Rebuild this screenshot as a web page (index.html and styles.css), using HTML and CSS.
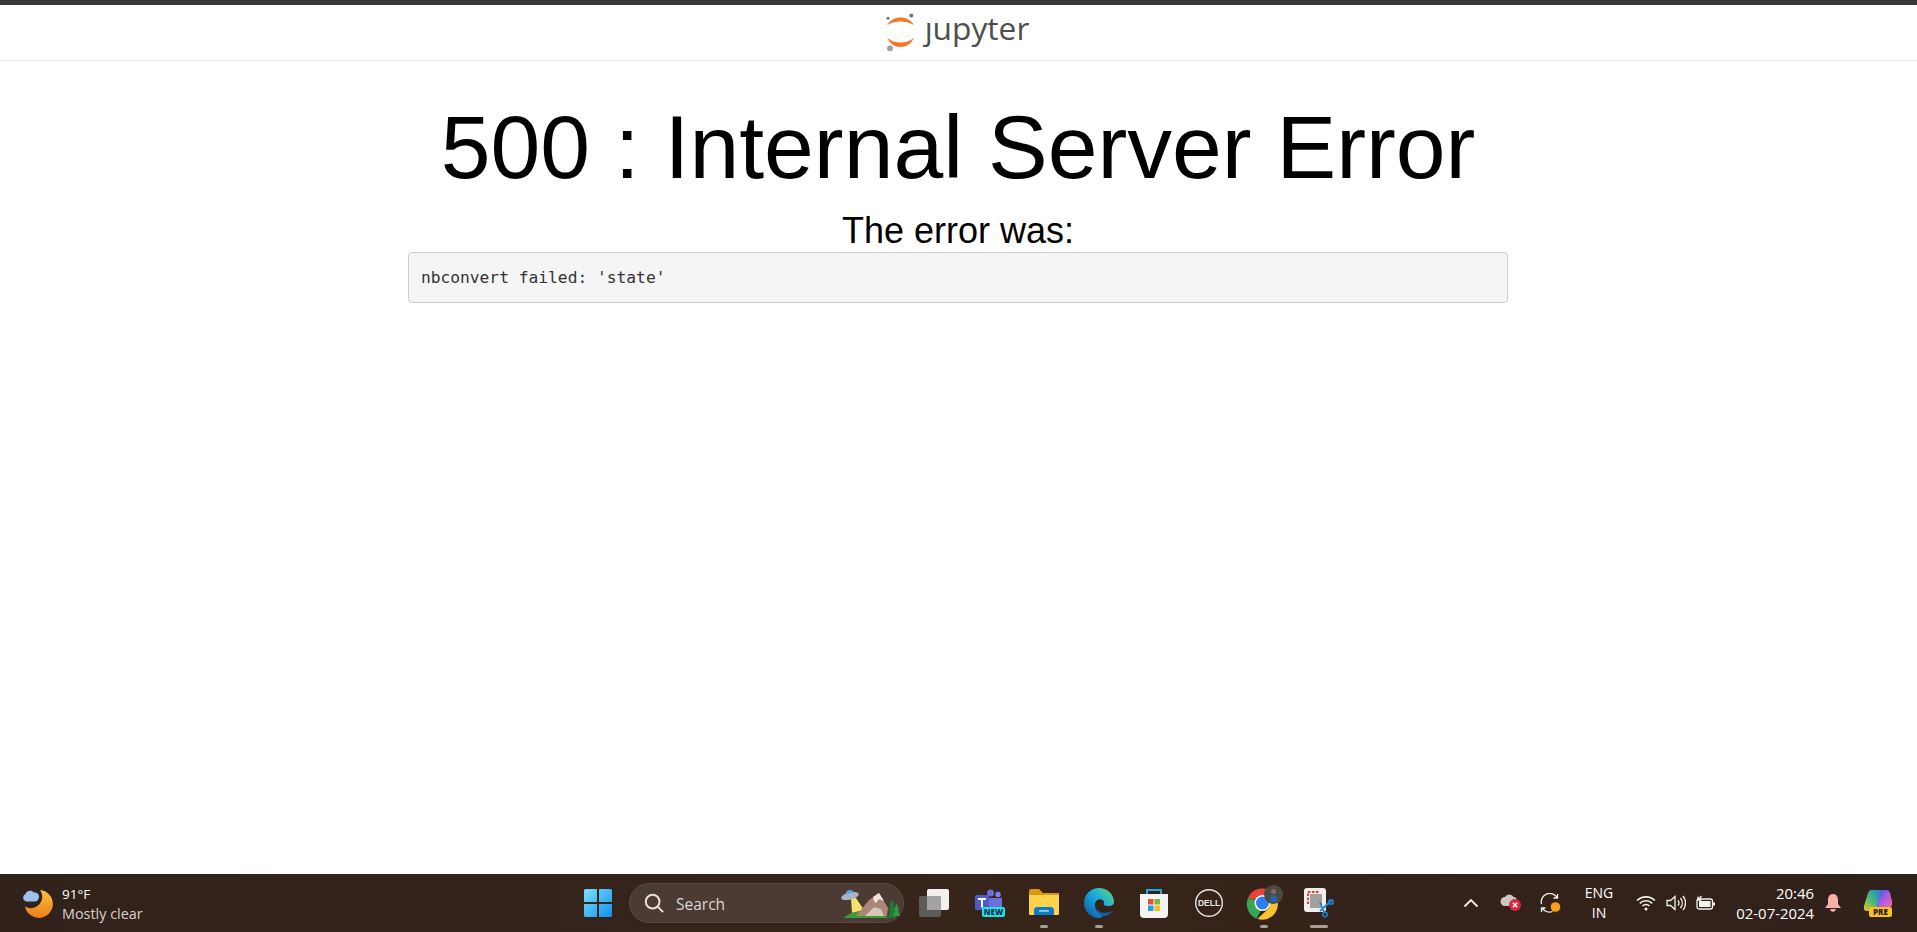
FILE: index.html
```html
<!DOCTYPE html>
<html lang="en">
<head>
  <meta charset="utf-8" />
  <title>500 : Internal Server Error</title>
  <link rel="stylesheet" href="styles.css">
</head>
<body>
  <div class="browser-page">
    <header class="navbar">
      <a class="brand" href="#" aria-label="jupyter">
        <svg class="brand-mark" width="32" height="40" viewBox="0 0 32 40">
          <path fill="#f37726" d="M2.3 12C5 7 10 4.5 15.5 4.5S26 7 29 12C25 9.5 20 8.5 15.5 8.5S6 9.5 2.3 12Z"/>
          <path fill="#f37726" d="M2.3 25C6 28 11 29.5 15.5 29.5S25 28 29 25C26 31 21 34 15.5 34S5 31 2.3 25Z"/>
          <circle cx="26.3" cy="2.6" r="2" fill="#767677"/>
          <circle cx="3" cy="5.3" r="1.4" fill="#616262"/>
          <circle cx="5" cy="35.3" r="2.9" fill="#9e9e9e"/>
        </svg>
        <span class="brand-name">ȷupyter</span>
      </a>
    </header>

    <main class="error">
      <h1>500 : Internal Server Error</h1>
      <h2>The error was:</h2>
      <pre>nbconvert failed: 'state'</pre>
    </main>
  </div>

  <footer class="taskbar">
    <div class="weather">
      <svg width="32" height="32" viewBox="0 0 32 32">
        <defs>
          <linearGradient id="moonFill" x1="0" y1="0" x2="0" y2="1">
            <stop offset="0" stop-color="#fcc23a"/>
            <stop offset="1" stop-color="#ee7d1b"/>
          </linearGradient>
        </defs>
        <path fill="url(#moonFill)" d="M19 3A14 14 0 1 1 4 19C12 26 27 15 19 3Z"/>
        <path fill="#9cc3ee" d="M5 14.500A4 4 0 0 1 4.500 7C5.500 3.500 10.500 2.500 13 5.500C16 5 18 7 18 9.500C18 12.500 16 14.500 13.500 14.500Z"/>
      </svg>
      <div class="weather-text">
        <div class="temp">91°F</div>
        <div class="cond">Mostly clear</div>
      </div>
    </div>

    <div class="task-icons">
      <div class="task-btn start">
        <svg width="30" height="30" viewBox="0 0 30 30">
          <defs>
            <linearGradient id="winFill" x1="0" y1="0" x2="1" y2="1">
              <stop offset="0" stop-color="#7ce0fb"/>
              <stop offset="1" stop-color="#0f8fee"/>
            </linearGradient>
          </defs>
          <path fill="url(#winFill)" d="M1 2.500Q1 1 2.500 1H14V14H1ZM16 1H27.500Q29 1 29 2.500V14H16ZM1 16H14V29H2.500Q1 29 1 27.500ZM16 16H29V27.500Q29 29 27.500 29H16Z"/>
        </svg>
      </div>

      <div class="search-pill">
        <svg width="20" height="20" viewBox="0 0 22 22" fill="none" stroke="#e6e1dd" stroke-width="2.200">
          <circle cx="9.500" cy="9.500" r="7.500"/>
          <path d="M15 15L21 21"/>
        </svg>
        <span class="search-label">Search</span>
        <svg class="search-art" width="59" height="31" viewBox="0 0 59 31">
          <path fill="#f2e46c" d="M10 10H15L23 22L11 25Z"/>
          <path fill="#3f9a3d" d="M3 30C8 25 18 22 25 24C33 24 42 26 48 30Z"/>
          <path fill="#a98676" d="M15 28L28 12L38 5L47 20L46 28Z"/>
          <path fill="#efe4de" d="M32 9L38 5L43 13L38 11L35 15L33 13Z"/>
          <path fill="#d9c6bb" d="M24 28L33 19L40 21L43 28Z"/>
          <path fill="#1f7a3a" d="M47 30L49 23H47L50 17H48.500L51 11L53.500 17H52L55 23H53L55 30Z"/>
          <path fill="#2d9a3f" d="M52 28L54 22H53L55.500 15L58 22H57L59 28Z"/>
          <ellipse cx="9" cy="8" rx="9" ry="3.600" fill="#a9b4c4" transform="rotate(-14 9 8)"/>
          <path fill="#5da7e0" d="M4.500 6.500A4.500 4.500 0 0 1 13 4.500Z"/>
        </svg>
      </div>

      <div class="task-btn">
        <svg width="32" height="32" viewBox="0 0 32 32">
          <rect x="1" y="9" width="22" height="21" rx="2" fill="#5d5b5a"/>
          <rect x="9" y="2" width="22" height="21" rx="2" fill="#f1f0ef"/>
          <rect x="9" y="9" width="14" height="14" fill="#a5a3a2"/>
        </svg>
      </div>

      <div class="task-btn">
        <svg width="32" height="32" viewBox="0 0 32 32">
          <circle cx="17.500" cy="6" r="3.500" fill="#6d6fd6"/>
          <circle cx="25" cy="7.500" r="2.700" fill="#7b83eb"/>
          <path fill="#6a6fdb" d="M15 11H29V23H15Z"/>
          <rect x="2" y="8" width="14" height="15" rx="1.500" fill="#5059c9"/>
          <path fill="#fff" d="M5 11H13V13H10V20.500H8V13H5Z"/>
          <rect x="9" y="20" width="23" height="10" rx="2" fill="#1ee4ea"/>
          <text class="badge-new" x="20.500" y="28">NEW</text>
        </svg>
      </div>

      <div class="task-btn running">
        <svg width="32" height="32" viewBox="0 0 32 32">
          <path fill="#d79a12" d="M1 4Q1 2 3 2H11L15 6H31V28H1Z"/>
          <path fill="#fcd34d" d="M1 8H31V26Q31 28 29 28H3Q1 28 1 26Z"/>
          <path fill="#0f7cc6" d="M6 24Q6 20 9 20H23Q26 20 26 24V28H6Z"/>
          <rect x="11" y="23" width="10" height="1.800" rx="0.900" fill="#8fd2f7"/>
        </svg>
      </div>

      <div class="task-btn running">
        <svg width="32" height="32" viewBox="0 0 32 32">
          <defs>
            <linearGradient id="edgeFill" x1="0" y1="1" x2="1" y2="0">
              <stop offset="0" stop-color="#0b4f9e"/>
              <stop offset="0.550" stop-color="#1ba9dd"/>
              <stop offset="1" stop-color="#5fdc74"/>
            </linearGradient>
          </defs>
          <path fill="url(#edgeFill)" d="M16 1C24 1 31 7 31 15C31 16 30.800 17 30.500 17.500C28 20 24 19.500 21.500 18.500C20 17.800 20.500 16 21 15C19 11 13 12 12 17C11 22 15 27 20 29C18.500 30.500 17 31 16 31C7.500 31 1 24 1 16C1 8 7.500 1 16 1Z"/>
          <path fill="#33221a" d="M31 17C28 20 24 19.500 21.500 18.500C20 17.800 20.500 16 21 15C19 11 13 12 12 17C12 21 15 24.500 19 25.500C24 26.500 28 25 30 23C30.700 21 31 19 31 17Z"/>
          <path fill="#0f5ea8" d="M12 17C11 22 15 27 20 29C24 29.500 28 27 30 23C28 25 24 26.500 19 25.500C15 24.500 12 21 12 17Z"/>
        </svg>
      </div>

      <div class="task-btn">
        <svg width="32" height="32" viewBox="0 0 32 32">
          <path fill="none" stroke="#27a5e3" stroke-width="2" d="M9 8V3H23V8"/>
          <path fill="#f5f4f3" d="M2 7H30V27Q30 31 26 31H6Q2 31 2 27Z"/>
          <rect x="10" y="12" width="5.500" height="5.500" fill="#e8512d"/>
          <rect x="16.500" y="12" width="5.500" height="5.500" fill="#7cb82f"/>
          <rect x="10" y="18.500" width="5.500" height="5.500" fill="#1fa2e8"/>
          <rect x="16.500" y="18.500" width="5.500" height="5.500" fill="#fbbb1c"/>
        </svg>
      </div>

      <div class="task-btn">
        <svg width="30" height="30" viewBox="0 0 30 30">
          <circle cx="15" cy="15" r="13.300" fill="none" stroke="#e9e6e3" stroke-width="1.400"/>
          <text class="dell-text" x="15" y="18">DELL</text>
        </svg>
      </div>

      <div class="task-btn running">
        <svg class="chrome-icon" width="38" height="36" viewBox="0 0 38 36">
          <path fill="#e8443a" d="M3 13A15.500 15.500 0 0 1 30 10L17.500 10A8 8 0 0 0 10.500 14.500Z"/>
          <path fill="#36a853" d="M3 13L10.500 15A8 8 0 0 0 16 25.500L11.500 33.500A15.500 15.500 0 0 1 3 13Z"/>
          <path fill="#f8c32c" d="M30 10A15.500 15.500 0 0 1 12.500 33.800L22 25A8 8 0 0 0 24 14Z"/>
          <circle cx="17.500" cy="18" r="8" fill="#fff"/>
          <circle cx="17.500" cy="18" r="6.500" fill="#2f7cf0"/>
          <circle cx="28.500" cy="9.500" r="9.500" fill="#4a4a42"/>
          <circle cx="28.500" cy="6.500" r="2.500" fill="#8a6a55"/>
          <path fill="#2b5f9f" d="M25 17V11Q28.500 8.500 32 11V17Z"/>
        </svg>
      </div>

      <div class="task-btn running wide">
        <svg width="32" height="32" viewBox="0 0 32 32">
          <rect x="1" y="1" width="22" height="24" rx="3" fill="#f0efee"/>
          <path fill="none" stroke="#d9432e" stroke-width="2" stroke-dasharray="2.500 1.500" d="M5 17V5H17"/>
          <path fill="#a3a1a0" d="M7 7H19V21H7Z"/>
          <path fill="none" stroke="#1a86d8" stroke-width="1.800" d="M17 24L29 13M17 15L21 25"/>
          <circle cx="28" cy="15" r="2.200" fill="none" stroke="#1a86d8" stroke-width="1.600"/>
          <circle cx="22" cy="27.500" r="2.200" fill="none" stroke="#1a86d8" stroke-width="1.600"/>
        </svg>
      </div>
    </div>

    <div class="tray">
      <div class="tray-btn">
        <svg width="16" height="10" viewBox="0 0 16 10" fill="none" stroke="#f4f1ef" stroke-width="1.800"><path d="M1.500 8.500L8 2L14.500 8.500"/></svg>
      </div>
      <div class="tray-btn">
        <svg width="22" height="20" viewBox="0 0 22 20">
          <path fill="#c9c6c4" d="M5 13A4.500 4.500 0 0 1 5 4C6.500 0.500 12 0.500 13.500 4C16 4 17 6 17 8V13Z"/>
          <circle cx="15" cy="12" r="6" fill="#e0243a"/>
          <path stroke="#fff" stroke-width="1.500" d="M12.800 9.800L17.200 14.200M17.200 9.800L12.800 14.200"/>
        </svg>
      </div>
      <div class="tray-btn">
        <svg width="22" height="20" viewBox="0 0 22 20" fill="none" stroke="#f4f1ef" stroke-width="1.300">
          <path d="M1.500 11A8.500 8.500 0 0 1 17 4.500M17.500 1V5H13.500"/>
          <path d="M12.500 18.500A8.500 8.500 0 0 1 2.500 15.500M1.500 19V15H5.500"/>
          <circle cx="15.500" cy="14" r="4.800" fill="#f9a01b" stroke="none"/>
        </svg>
      </div>
      <div class="lang">ENG<br>IN</div>
      <div class="tray-btn small">
        <svg width="20" height="16" viewBox="0 0 20 16" fill="none" stroke="#f4f1ef" stroke-width="1.600">
          <path d="M1 5.500A13 13 0 0 1 19 5.500M3.800 8.300A9 9 0 0 1 16.200 8.300M6.500 11A5 5 0 0 1 13.500 11"/>
          <circle cx="10" cy="14" r="1.500" fill="#f4f1ef" stroke="none"/>
        </svg>
      </div>
      <div class="tray-btn small">
        <svg width="20" height="16" viewBox="0 0 20 16" fill="none" stroke="#f4f1ef" stroke-width="1.300">
          <path d="M1 5.500H4.500L9 1.500V14.500L4.500 10.500H1Z"/>
          <path d="M12 5.500A4 4 0 0 1 12 10.500M14.500 3A8 8 0 0 1 14.500 13M17 1A11 11 0 0 1 17 15" />
        </svg>
      </div>
      <div class="tray-btn small">
        <svg width="20" height="16" viewBox="0 0 20 16" fill="none" stroke="#f4f1ef" stroke-width="1.300">
          <rect x="1" y="4" width="15.500" height="10" rx="2"/>
          <rect x="3" y="6" width="11.500" height="6" fill="#f4f1ef" stroke="none"/>
          <path d="M18 7.500V10.500" stroke-width="2"/>
          <path d="M2 5L5.500 1M2 1.500V5H5.500" stroke="#f4f1ef"/>
        </svg>
      </div>
      <div class="clock">
        <div>20:46</div>
        <div>02-07-2024</div>
      </div>
      <div class="bell">
        <svg width="18" height="20" viewBox="0 0 18 20">
          <path fill="#f6b0a6" d="M9 1C12.500 1 14 4 14 7V11L17 15H1L4 11V7C4 4 5.500 1 9 1Z"/>
          <path fill="#f6b0a6" d="M6.300 16H11.700A2.700 2.700 0 0 1 6.300 16Z"/>
        </svg>
      </div>
      <div class="copilot">
        <svg width="30" height="30" viewBox="0 0 30 30">
          <defs>
            <linearGradient id="copA" x1="0" y1="1" x2="1" y2="0">
              <stop offset="0" stop-color="#f5c02c"/>
              <stop offset="0.500" stop-color="#3dba7a"/>
              <stop offset="1" stop-color="#1f7fe0"/>
            </linearGradient>
            <linearGradient id="copB" x1="0" y1="0" x2="1" y2="1">
              <stop offset="0" stop-color="#2067de"/>
              <stop offset="0.500" stop-color="#b05ae0"/>
              <stop offset="1" stop-color="#f06a9e"/>
            </linearGradient>
          </defs>
          <path fill="url(#copA)" d="M8 2H19L14 19Q13 23 9 23H4Q0 23 1 18L5 5Q6 2 8 2Z"/>
          <path fill="url(#copB)" d="M16 6Q17 2 21 2H23Q26 2 27 5L29 13Q30 20 25 20H14Z"/>
          <rect x="6" y="19" width="23" height="10" rx="2" fill="#fbc21c"/>
          <text class="badge-pre" x="17.500" y="27">PRE</text>
        </svg>
      </div>
    </div>
  </footer>
</body>
</html>
```

FILE: styles.css
```css
html, body {
  margin:0;
  height:100%;
}
body {
  display:flex;
  flex-direction:column;
  height:932px;
  overflow:hidden;
  background:#fff;
  color:#000;
  font-family:'Liberation Sans',Arial,sans-serif;
}
.browser-page {
  flex:1;
  border-top:5px solid #383838;
}
.navbar {
  height:55px;
  border-bottom:1px solid #e7e7e7;
  display:flex;
  justify-content:center;
  align-items:flex-start;
}
.brand {
  display:flex;
  align-items:flex-start;
  text-decoration:none;
  padding-top:8px;
  margin-left:-3px;
}
.brand-name {
  font-family:'Open Sans',sans-serif;
  font-size:31.7px;
  line-height:30px;
  color:#4e4e4e;
  margin-left:8px;
}
.error {
  width:1100px;
  margin:0 auto;
  padding-right:1px;
  text-align:center;
}
h1 {
  margin:36px 0 0;
  font-size:89.5px;
  font-weight:400;
  line-height:100px;
}
h2 {
  margin:14px 0 0;
  font-size:36px;
  font-weight:400;
  line-height:40px;
}
pre {
  margin:1px 0 0;
  padding:12.9px 11.9px;
  font-family:'DejaVu Sans Mono','Liberation Mono',monospace;
  font-size:16.25px;
  line-height:23.2px;
  color:#333;
  text-align:left;
  background:#f5f5f5;
  border:1px solid #ccc;
  border-radius:4px;
}

/* windows taskbar */
.taskbar {
  height:58px;
  display:grid;
  grid-template-columns:1fr auto 1fr;
  align-items:center;
  background:linear-gradient(90deg,#30221b,#37241a 50%,#30211a);
  color:#fff;
  font-family:'Open Sans',sans-serif;
}
.weather {
  display:flex;
  align-items:center;
  padding-left:21px;
}
.weather-text {
  margin-left:9px;
  padding-top:2px;
  font-size:14.4px;
  line-height:20px;
}
.temp {
  font-size:13.5px;
}
.cond {
  color:#d6d2cf;
}
.task-icons {
  display:flex;
  align-items:center;
  margin-left:-1px;
}
.task-btn {
  position:relative;
  width:55px;
  height:58px;
  display:flex;
  align-items:center;
  justify-content:center;
}
.task-btn.start {
  margin-right:4px;
}
.task-btn.running::after {
  content:'';
  position:absolute;
  bottom:4px;
  left:23.500px;
  width:8px;
  height:3px;
  border-radius:2px;
  background:#a89f99;
}
.task-btn.wide::after {
  left:18.500px;
  width:18px;
}
.search-pill {
  width:275px;
  height:40px;
  box-sizing:border-box;
  margin-right:2px;
  padding:0 3px 0 14px;
  display:flex;
  align-items:center;
  background:#4b3b33;
  border:1px solid #5a4a42;
  border-radius:20px;
}
.search-label {
  margin-left:12px;
  padding-top:2px;
  font-size:15.5px;
  color:#dcd7d3;
}
.search-art {
  margin-left:auto;
}
.badge-new, .badge-pre {
  font-family:'Open Sans',sans-serif;
  font-weight:800;
  font-size:8px;
  text-anchor:middle;
  fill:#16304a;
}
.badge-pre {
  fill:#2a2110;
}
.dell-text {
  font-family:'Liberation Sans',sans-serif;
  font-weight:700;
  font-size:8.500px;
  text-anchor:middle;
  fill:#e9e6e3;
}
.tray {
  display:flex;
  align-items:center;
  justify-content:flex-end;
  padding-right:24px;
}
.tray-btn {
  width:40px;
  display:flex;
  justify-content:center;
}
.tray-btn.small {
  width:30px;
}
.lang {
  width:56px;
  margin-right:4px;
  text-align:center;
  font-size:14px;
  line-height:20px;
}
.clock {
  width:93px;
  text-align:right;
  font-size:14.9px;
  line-height:20px;
}
.bell {
  width:24px;
  margin-left:7px;
  display:flex;
  justify-content:center;
}
.copilot {
  margin-left:18px;
  width:30px;
  display:flex;
}
```
